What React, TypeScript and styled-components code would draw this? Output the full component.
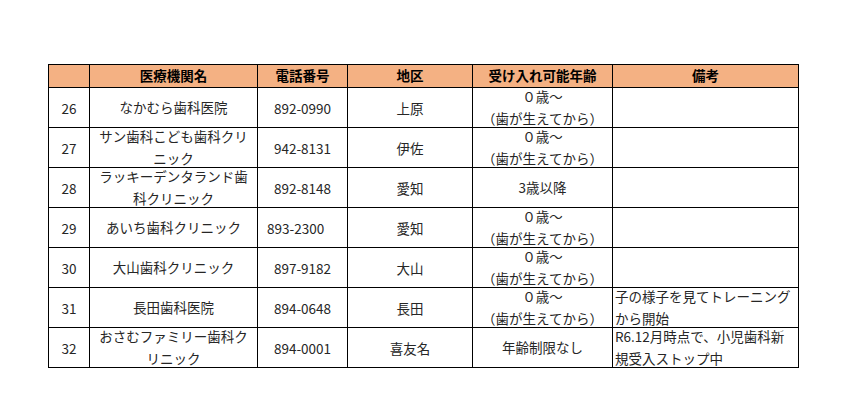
import { Fragment } from 'react'
import styled, { createGlobalStyle } from 'styled-components'

const GlobalStyle = createGlobalStyle`
    body {
        margin: 0;
        background: #ffffff;
        font-family: "Noto Sans CJK JP", "Noto Sans", sans-serif;
    }
`

const Page = styled.div`
    padding: 64px 0 0 48px;
`

const Grid = styled.div`
    display: grid;
    grid-template-columns: 41px 168px 90px 125px 140px 186px;
    grid-auto-rows: 40px;
    grid-template-rows: 23px;
    width: 751px;
    border-left: 1px solid #000;
    border-top: 1px solid #000;
    box-sizing: border-box;
`

const HeadCell = styled.div`
    box-sizing: border-box;
    border-right: 1px solid #000;
    border-bottom: 1px solid #000;
    background: #f4b183;
    display: flex;
    align-items: center;
    justify-content: center;
    font-size: 13.5px;
    font-weight: 700;
    color: #000;
    line-height: 1;
`

type Align = 'center' | 'left'

const Cell = styled.div<{ $align?: Align; $pad?: number }>`
    box-sizing: border-box;
    border-right: 1px solid #000;
    border-bottom: 1px solid #000;
    display: flex;
    flex-direction: column;
    justify-content: center;
    align-items: ${(p) => (p.$align === 'left' ? 'flex-start' : 'center')};
    padding-left: ${(p) => p.$pad ?? 0}px;
    font-size: 13.5px;
    color: #262626;
    overflow: visible;
    white-space: nowrap;
`

const Line = styled.span`
    display: block;
    line-height: 21.5px;
`

type Row = {
    no: string
    name: string[]
    tel: string
    telLeft?: boolean
    area: string
    age: string[]
    note: string[]
}

const babyTeeth = ['０歳～', '（歯が生えてから）']

const rows: Row[] = [
    { no: '26', name: ['なかむら歯科医院'], tel: '892-0990', area: '上原', age: babyTeeth, note: [] },
    { no: '27', name: ['サン歯科こども歯科クリ', 'ニック'], tel: '942-8131', area: '伊佐', age: babyTeeth, note: [] },
    { no: '28', name: ['ラッキーデンタランド歯', '科クリニック'], tel: '892-8148', area: '愛知', age: ['3歳以降'], note: [] },
    { no: '29', name: ['あいち歯科クリニック'], tel: '893-2300', telLeft: true, area: '愛知', age: babyTeeth, note: [] },
    { no: '30', name: ['大山歯科クリニック'], tel: '897-9182', area: '大山', age: babyTeeth, note: [] },
    {
        no: '31',
        name: ['長田歯科医院'],
        tel: '894-0648',
        area: '長田',
        age: babyTeeth,
        note: ['子の様子を見てトレーニング', 'から開始'],
    },
    {
        no: '32',
        name: ['おさむファミリー歯科ク', 'リニック'],
        tel: '894-0001',
        area: '喜友名',
        age: ['年齢制限なし'],
        note: ['R6.12月時点で、小児歯科新', '規受入ストップ中'],
    },
]

const headers = ['', '医療機関名', '電話番号', '地区', '受け入れ可能年齢', '備考']

const Lines = ({ lines }: { lines: string[] }) => (
    <>
        {lines.map((l, i) => (
            <Line key={i}>{l}</Line>
        ))}
    </>
)

export default function App() {
    return (
        <>
            <GlobalStyle />
            <Page>
                <Grid>
                    {headers.map((h, i) => (
                        <HeadCell key={i}>{h}</HeadCell>
                    ))}
                    {rows.map((r) => (
                        <Fragment key={r.no}>
                            <Cell>{r.no}</Cell>
                            <Cell>
                                <Lines lines={r.name} />
                            </Cell>
                            <Cell $align={r.telLeft ? 'left' : 'center'} $pad={r.telLeft ? 9 : 0}>
                                {r.tel}
                            </Cell>
                            <Cell>{r.area}</Cell>
                            <Cell>
                                <Lines lines={r.age} />
                            </Cell>
                            <Cell $align="left" $pad={2}>
                                <Lines lines={r.note} />
                            </Cell>
                        </Fragment>
                    ))}
                </Grid>
            </Page>
        </>
    )
}
